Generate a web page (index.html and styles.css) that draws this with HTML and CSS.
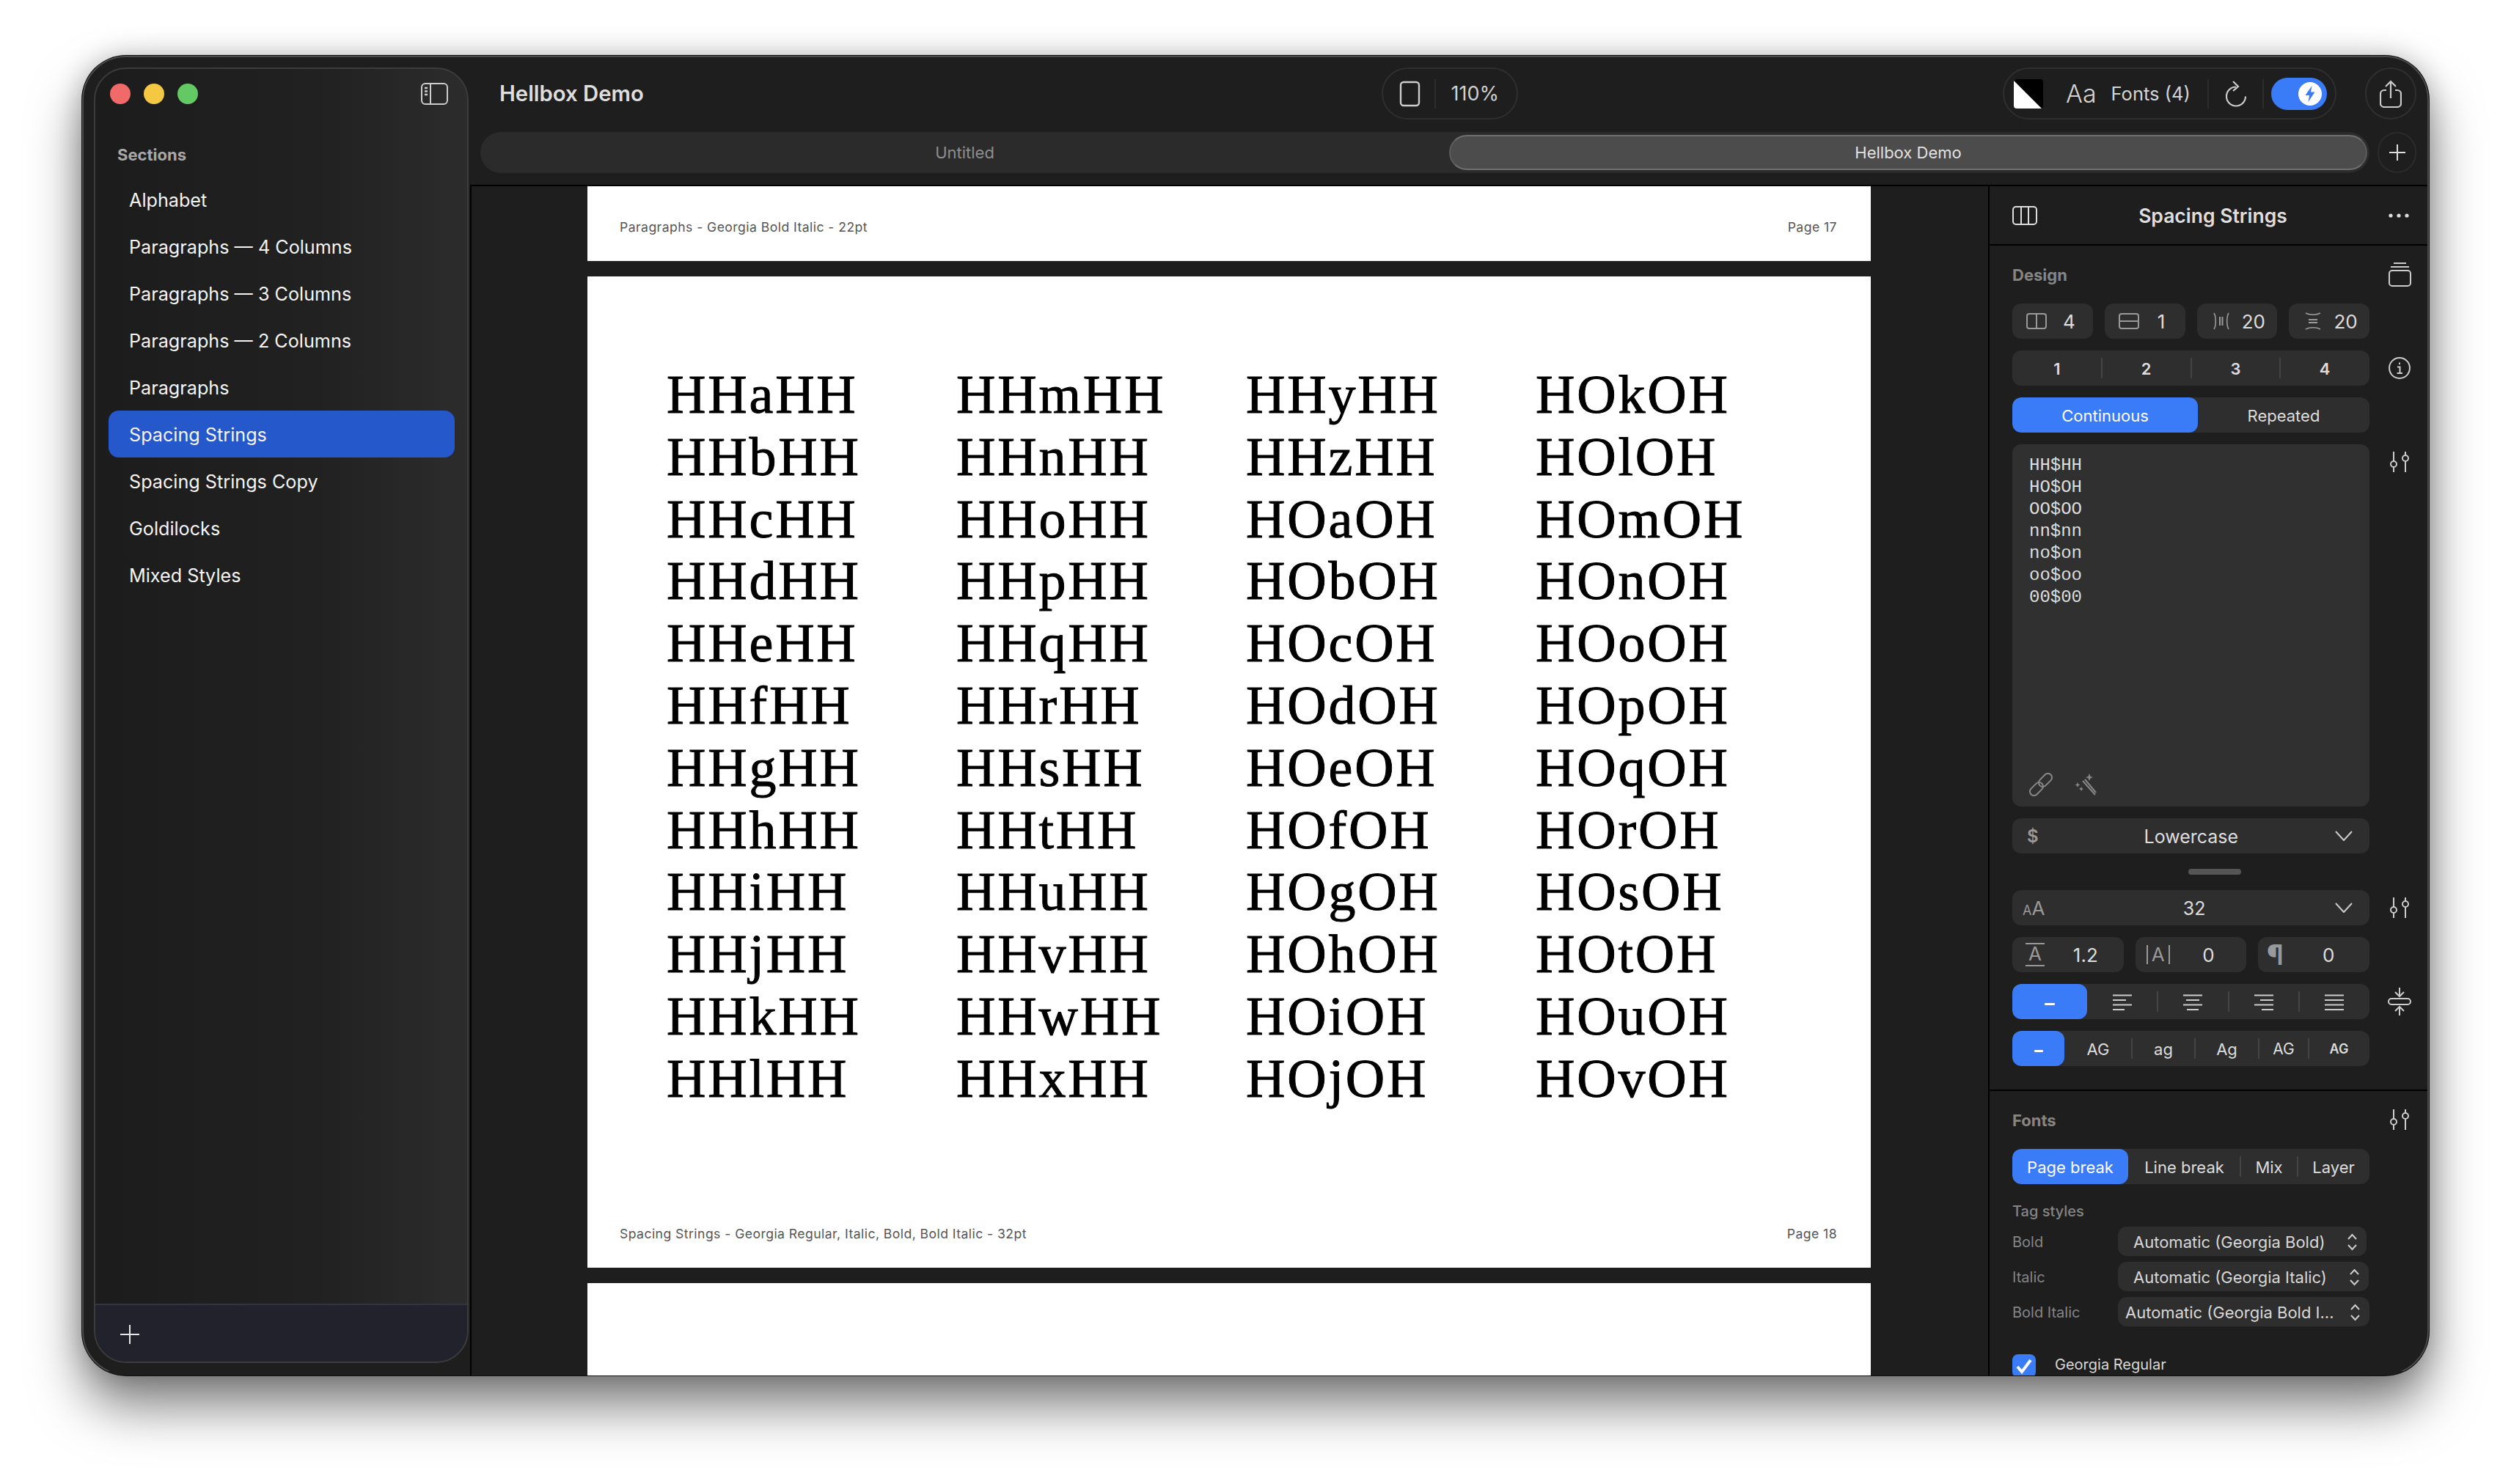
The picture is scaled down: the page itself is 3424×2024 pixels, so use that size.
FILE: index.html
```html
<!DOCTYPE html>
<html lang="en">
<head>
  <meta charset="UTF-8">
  <title>Hellbox Demo</title>
  <link rel="stylesheet" href="styles.css">
</head>
<body>
  <div class="window">

    <!-- Sections sidebar -->
    <div class="sidebar-col">
      <aside class="sidebar">
        <div class="side-head">
          <span class="light red"></span>
          <span class="light yellow"></span>
          <span class="light green"></span>
          <svg class="side-toggle" width="37" height="30" viewBox="0 0 37 30" fill="none" stroke="#ccc" stroke-width="2">
            <rect x="1" y="1" width="35" height="28" rx="5"/>
            <path d="M13 1V29"/>
            <path d="M5 7H9M5 11.5H9M5 16H9" stroke-width="2.4"/>
          </svg>
        </div>
        <div class="side-title">Sections</div>
        <ul class="side-list">
          <li>Alphabet</li>
          <li>Paragraphs — 4 Columns</li>
          <li>Paragraphs — 3 Columns</li>
          <li>Paragraphs — 2 Columns</li>
          <li>Paragraphs</li>
          <li class="active">Spacing Strings</li>
          <li>Spacing Strings Copy</li>
          <li>Goldilocks</li>
          <li>Mixed Styles</li>
        </ul>
        <div class="side-foot">
          <svg width="26" height="26" viewBox="0 0 26 26" stroke="#e6e6e6" stroke-width="2"><path d="M13 0V26M0 13H26"/></svg>
        </div>
      </aside>
    </div>

    <div class="main">

      <!-- Toolbar and tabs -->
      <header class="toolbar">
        <div class="tool-row">
          <div class="doc-title">Hellbox Demo</div>
          <div class="pill zoom-pill">
            <svg width="29" height="36" viewBox="0 0 29 36" fill="none" stroke="#ccc" stroke-width="2.4"><rect x="2" y="2" width="25" height="32" rx="4"/></svg>
            <span class="pill-sep"></span>
            <span class="zoom-val">110%</span>
          </div>
          <div class="tool-right">
            <div class="pill fonts-pill">
              <svg class="contrast" width="40" height="40" viewBox="0 0 40 40"><rect width="40" height="40" rx="4" fill="#000"/><path d="M0 2L38 40H4a4 4 0 0 1-4-4Z" fill="#fff"/></svg>
              <span class="aa">Aa</span>
              <span class="fonts-label">Fonts (4)</span>
              <span class="pill-sep"></span>
              <svg class="refresh" width="30" height="38" viewBox="0 0 30 38" fill="none" stroke="#ccc" stroke-width="2.2"><path d="M15 9.5A13 13 0 1 0 28 22.500"/><path d="M11 2L18 9L11 15"/></svg>
              <span class="pill-sep"></span>
              <div class="toggle">
                <svg width="32" height="32" viewBox="0 0 32 32"><circle cx="16" cy="16" r="16" fill="#fff"/><path d="M18.500 5L9.500 18H15L13.500 27L22.500 13.500H17Z" fill="#3a7bf7"/></svg>
              </div>
            </div>
            <div class="pill share-pill">
              <svg width="30" height="38" viewBox="0 0 30 38" fill="none" stroke="#ccc" stroke-width="2.2"><path d="M9 14H6a5 5 0 0 0-5 5V32a5 5 0 0 0 5 5H24a5 5 0 0 0 5-5V19a5 5 0 0 0-5-5H21"/><path d="M15 25V2M8 9L15 2L22 9"/></svg>
            </div>
          </div>
        </div>
        <div class="tab-row">
          <div class="tabs">
            <div class="tab">Untitled</div>
            <div class="tab current">Hellbox Demo</div>
          </div>
          <div class="tab-add">
            <svg width="22" height="22" viewBox="0 0 22 22" stroke="#ddd" stroke-width="2"><path d="M11 0V22M0 11H22"/></svg>
          </div>
        </div>
      </header>

      <div class="workspace">

        <!-- Document pages -->
        <section class="canvas">
          <div class="page page-top">
            <span>Paragraphs - Georgia Bold Italic - 22pt</span>
            <span>Page 17</span>
          </div>
          <div class="page page-full">
            <div class="strings">
              <p>HHaHH<br>HHbHH<br>HHcHH<br>HHdHH<br>HHeHH<br>HHfHH<br>HHgHH<br>HHhHH<br>HHiHH<br>HHjHH<br>HHkHH<br>HHlHH</p>
              <p>HHmHH<br>HHnHH<br>HHoHH<br>HHpHH<br>HHqHH<br>HHrHH<br>HHsHH<br>HHtHH<br>HHuHH<br>HHvHH<br>HHwHH<br>HHxHH</p>
              <p>HHyHH<br>HHzHH<br>HOaOH<br>HObOH<br>HOcOH<br>HOdOH<br>HOeOH<br>HOfOH<br>HOgOH<br>HOhOH<br>HOiOH<br>HOjOH</p>
              <p>HOkOH<br>HOlOH<br>HOmOH<br>HOnOH<br>HOoOH<br>HOpOH<br>HOqOH<br>HOrOH<br>HOsOH<br>HOtOH<br>HOuOH<br>HOvOH</p>
            </div>
            <div class="page-foot">
              <span>Spacing Strings - Georgia Regular, Italic, Bold, Bold Italic - 32pt</span>
              <span>Page 18</span>
            </div>
          </div>
          <div class="page page-next"></div>
        </section>

        <!-- Inspector -->
        <section class="inspector">
          <div class="insp-head">
            <svg width="34" height="26" viewBox="0 0 34 26" fill="none" stroke="#ddd" stroke-width="2"><rect x="1" y="1" width="32" height="24" rx="4"/><path d="M12 1V25M22 1V25"/></svg>
            <div class="insp-title">Spacing Strings</div>
            <svg width="28" height="6" viewBox="0 0 28 6" fill="#ddd"><circle cx="3" cy="3" r="2.600"/><circle cx="14" cy="3" r="2.600"/><circle cx="25" cy="3" r="2.600"/></svg>
          </div>

          <div class="group">
            <div class="row head-row">
              <div class="ctl group-label">Design</div>
              <div class="side">
                <svg width="31" height="33" viewBox="0 0 31 33" fill="none" stroke="#ccc" stroke-width="2"><path d="M7 1H24M3 6H28"/><rect x="1" y="11" width="29" height="21" rx="4"/></svg>
              </div>
            </div>

            <div class="row">
              <div class="ctl quad">
                <div class="tile">
                  <span class="tile-icon"><svg width="28" height="22" viewBox="0 0 28 22" fill="none" stroke="#999" stroke-width="2"><rect x="1" y="1" width="26" height="20" rx="3"/><path d="M14 1V21"/></svg></span>
                  <span class="tile-val">4</span>
                </div>
                <div class="tile">
                  <span class="tile-icon"><svg width="28" height="22" viewBox="0 0 28 22" fill="none" stroke="#999" stroke-width="2"><rect x="1" y="1" width="26" height="20" rx="3"/><path d="M1 11H27"/></svg></span>
                  <span class="tile-val">1</span>
                </div>
                <div class="tile">
                  <span class="tile-icon"><svg width="22" height="24" viewBox="0 0 22 24" fill="none" stroke="#999" stroke-width="1.600"><path d="M1 1C4 6 4 18 1 23M21 1C18 6 18 18 21 23"/><path d="M9 6V18M12.500 6V18" stroke-width="2"/></svg></span>
                  <span class="tile-val">20</span>
                </div>
                <div class="tile">
                  <span class="tile-icon"><svg width="22" height="24" viewBox="0 0 22 24" fill="none" stroke="#999" stroke-width="1.600"><path d="M1 1C6 4 16 4 21 1M1 23C6 20 16 20 21 23"/><path d="M5 10H17M5 14H17" stroke-width="2"/></svg></span>
                  <span class="tile-val">20</span>
                </div>
              </div>
              <div class="side"></div>
            </div>

            <div class="row">
              <div class="ctl seg cols-page">
                <span>1</span><span>2</span><span>3</span><span>4</span>
              </div>
              <div class="side">
                <svg width="30" height="30" viewBox="0 0 30 30" fill="none" stroke="#ccc" stroke-width="2"><circle cx="15" cy="15" r="14"/><path d="M15 7.500V10M12 13.500H15.500V21.500M11.500 22H19" stroke-width="2"/></svg>
              </div>
            </div>

            <div class="row">
              <div class="ctl seg cols-mode">
                <span class="on">Continuous</span><span>Repeated</span>
              </div>
              <div class="side"></div>
            </div>

            <div class="row row-top">
              <div class="ctl text-box">
                <pre class="strings-src">HH$HH
HO$OH
OO$OO
nn$nn
no$on
oo$oo
00$00</pre>
                <div class="text-tools">
                  <svg width="32" height="32" viewBox="0 0 32 32" fill="none" stroke="#888" stroke-width="2"><g transform="rotate(-45 16 16)"><rect x="-3" y="10.500" width="21" height="11" rx="5.500"/><rect x="14" y="10.500" width="21" height="11" rx="5.500"/></g></svg>
                  <svg width="30" height="30" viewBox="0 0 30 30" fill="none" stroke="#888" stroke-width="2"><path d="M11 10L28 29M14 8L29 26"/><path d="M20 0L21.500 4L25 5L21.500 6.500L20 10L18.500 6.500L15 5L18.500 4Z" fill="#888" stroke="none"/><path d="M4 12L5 14.500L7.500 15.500L5 16.500L4 19L3 16.500L0.500 15.500L3 14.500Z" fill="#888" stroke="none"/><path d="M9 18L10 20L12 21L10 22L9 24L8 22L6 21L8 20Z" fill="#888" stroke="none"/></svg>
                </div>
              </div>
              <div class="side side-top">
                <svg class="sliders" width="26" height="28" viewBox="0 0 26 28" fill="none" stroke="#ccc" stroke-width="2"><path d="M5 0V13M5 21V28M21 0V5M21 13V28"/><circle cx="5" cy="17" r="4"/><circle cx="21" cy="9" r="4"/></svg>
              </div>
            </div>

            <div class="row">
              <div class="ctl dropdown">
                <span class="drop-lead dollar">$</span>
                <span class="drop-val">Lowercase</span>
                <svg width="24" height="14" viewBox="0 0 24 14" fill="none" stroke="#ccc" stroke-width="2"><path d="M1 1L12 13L23 1"/></svg>
              </div>
              <div class="side"></div>
            </div>
          </div>

          <div class="handle"></div>

          <div class="group">
            <div class="row">
              <div class="ctl dropdown">
                <span class="drop-lead size-aa"><small>A</small>A</span>
                <span class="drop-val">32</span>
                <svg width="24" height="14" viewBox="0 0 24 14" fill="none" stroke="#ccc" stroke-width="2"><path d="M1 1L12 13L23 1"/></svg>
              </div>
              <div class="side">
                <svg class="sliders" width="26" height="28" viewBox="0 0 26 28" fill="none" stroke="#ccc" stroke-width="2"><path d="M5 0V13M5 21V28M21 0V5M21 13V28"/><circle cx="5" cy="17" r="4"/><circle cx="21" cy="9" r="4"/></svg>
              </div>
            </div>

            <div class="row">
              <div class="ctl triple">
                <div class="tile wide">
                  <span class="wide-icon"><span class="lead-a">A</span></span>
                  <span class="tile-val">1.2</span>
                </div>
                <div class="tile wide">
                  <span class="wide-icon"><span class="track-a">A</span></span>
                  <span class="tile-val">0</span>
                </div>
                <div class="tile wide">
                  <span class="wide-icon pilcrow">¶</span>
                  <span class="tile-val">0</span>
                </div>
              </div>
              <div class="side"></div>
            </div>

            <div class="row">
              <div class="ctl seg cols-align">
                <span class="on"><i class="dash"></i></span>
                <span><svg width="26" height="22" viewBox="0 0 26 22" stroke="#ccc" stroke-width="2"><path d="M0 1.500H26M0 8H18M0 14.500H26M0 21H16"/></svg></span>
                <span><svg width="26" height="22" viewBox="0 0 26 22" stroke="#ccc" stroke-width="2"><path d="M0 1.500H26M4 8H22M0 14.500H26M5 21H21"/></svg></span>
                <span><svg width="26" height="22" viewBox="0 0 26 22" stroke="#ccc" stroke-width="2"><path d="M0 1.500H26M8 8H26M0 14.500H26M10 21H26"/></svg></span>
                <span><svg width="26" height="22" viewBox="0 0 26 22" stroke="#ccc" stroke-width="2"><path d="M0 1.500H26M0 8H26M0 14.500H26M0 21H26"/></svg></span>
              </div>
              <div class="side">
                <svg width="32" height="38" viewBox="0 0 32 38" fill="none" stroke="#ccc" stroke-width="2"><rect x="1" y="15" width="30" height="8" rx="4"/><path d="M16 0V11M10 6L16 12L22 6M16 38V27M10 32L16 26L22 32"/></svg>
              </div>
            </div>

            <div class="row">
              <div class="ctl seg cols-case">
                <span class="on"><i class="dash small"></i></span>
                <span class="case-a">AG</span>
                <span class="case-b">ag</span>
                <span class="case-c">Ag</span>
                <span class="case-d">AG</span>
                <span class="case-e">AG</span>
              </div>
              <div class="side"></div>
            </div>
          </div>

          <div class="insp-rule"></div>

          <div class="group">
            <div class="row head-row">
              <div class="ctl group-label">Fonts</div>
              <div class="side">
                <svg class="sliders" width="26" height="28" viewBox="0 0 26 28" fill="none" stroke="#ccc" stroke-width="2"><path d="M5 0V13M5 21V28M21 0V5M21 13V28"/><circle cx="5" cy="17" r="4"/><circle cx="21" cy="9" r="4"/></svg>
              </div>
            </div>

            <div class="row">
              <div class="ctl seg cols-break">
                <span class="on">Page break</span><span>Line break</span><span>Mix</span><span>Layer</span>
              </div>
              <div class="side"></div>
            </div>
          </div>

          <div class="tag-title">Tag styles</div>
          <div class="tag-list">
            <div class="tag-row">
              <span class="tag-name">Bold</span>
              <div class="tag-select sel-bold"><span>Automatic (Georgia Bold)</span>
                <svg width="13" height="24" viewBox="0 0 13 24" fill="none" stroke="#ccc" stroke-width="2"><path d="M1 8L6.500 2L12 8M1 16L6.500 22L12 16"/></svg>
              </div>
            </div>
            <div class="tag-row">
              <span class="tag-name">Italic</span>
              <div class="tag-select sel-italic"><span>Automatic (Georgia Italic)</span>
                <svg width="13" height="24" viewBox="0 0 13 24" fill="none" stroke="#ccc" stroke-width="2"><path d="M1 8L6.500 2L12 8M1 16L6.500 22L12 16"/></svg>
              </div>
            </div>
            <div class="tag-row">
              <span class="tag-name">Bold Italic</span>
              <div class="tag-select sel-both"><span>Automatic (Georgia Bold I...</span>
                <svg width="13" height="24" viewBox="0 0 13 24" fill="none" stroke="#ccc" stroke-width="2"><path d="M1 8L6.500 2L12 8M1 16L6.500 22L12 16"/></svg>
              </div>
            </div>
          </div>

          <div class="font-check">
            <span class="check">
              <svg width="24" height="22" viewBox="0 0 24 22" fill="none" stroke="#fff" stroke-width="4"><path d="M3 12L9 19L21 3"/></svg>
            </span>
            <span class="check-label">Georgia Regular</span>
          </div>
        </section>
      </div>
    </div>
  </div>
</body>
</html>
```

FILE: styles.css
```css
* {
  box-sizing: border-box;
}

html, body {
  height: 2024px;
  overflow: hidden;
}

body {
  margin: 0;
  background: #ffffff;
  font-family: "Inter", "Liberation Sans", sans-serif;
  color: #dddddd;
}

.window {
  display: flex;
  width: 3200px;
  height: 1800px;
  margin: 76px 0 0 112px;
  background: #1e1e1e;
  border-radius: 60px;
  overflow: hidden;
  box-shadow: 0 0 0 1px #111111, 0 42px 70px rgba(0, 0, 0, 0.5), 0 0 36px rgba(0, 0, 0, 0.22);
  position: relative;
}

/* thin light rim, sits over the content */
.window::after {
  content: "";
  position: absolute;
  inset: 0;
  border-radius: 60px;
  border: 2px solid #4c4c4c;
  pointer-events: none;
  clip-path: inset(0 0 6px 0);
}

/* Sidebar */
.sidebar-col {
  width: 529px;
  flex: none;
  padding: 16px 2px 17px 16px;
}

.sidebar {
  display: flex;
  flex-direction: column;
  height: 100%;
  border: 2px solid #3c3c3c;
  border-radius: 44px;
  overflow: hidden;
  background: linear-gradient(90deg, #1c1c1c 0%, #212121 60%, #2c2c2c 100%);
}

.side-head {
  display: flex;
  align-items: center;
  gap: 18px;
  height: 68px;
  padding: 0 26px 0 20px;
  flex: none;
}

.light {
  width: 28px;
  height: 28px;
  border-radius: 50%;
}

.light.red { background: #f06a6a; }
.light.yellow { background: #f4c842; }
.light.green { background: #62c964; }

.side-toggle {
  margin-left: auto;
}

.side-title {
  margin: 34px 0 14px 30px;
  height: 30px;
  line-height: 30px;
  font-size: 22px;
  font-weight: 700;
  color: #a8a8a8;
}

.side-list {
  list-style: none;
  margin: 0 17px 0 18px;
  padding: 0;
}

.side-list li {
  height: 64px;
  line-height: 66px;
  padding-left: 28px;
  font-size: 25.200px;
  color: #f4f4f4;
  border-radius: 14px;
}

.side-list li.active {
  background: #2558cb;
}

.side-foot {
  display: flex;
  align-items: center;
  margin-top: auto;
  height: 79px;
  padding: 2px 0 0 34px;
  background: #22222c;
  border-top: 2px solid #34343f;
  flex: none;
}

/* Toolbar */
.main {
  flex: 1;
  display: flex;
  flex-direction: column;
  min-width: 0;
}

.toolbar {
  height: 178px;
  padding: 16px 14px 0;
  border-bottom: 2px solid #000000;
  flex: none;
}

.tool-row {
  display: grid;
  grid-template-columns: 1fr auto 1fr;
  align-items: center;
  height: 71px;
}

.doc-title {
  margin-left: 26px;
  font-size: 29.300px;
  font-weight: 600;
  color: #dedede;
}

.pill {
  display: flex;
  align-items: center;
  height: 71px;
  border: 2px solid #2f2f2f;
  border-radius: 36px;
}

.pill-sep {
  width: 2px;
  height: 40px;
  background: #2c2c2c;
}

.zoom-pill {
  width: 186px;
  padding-left: 22px;
}

.zoom-pill .pill-sep {
  margin: 0 21px 0 19px;
}

.zoom-val {
  font-size: 27px;
  color: #d0d0d0;
}

.tool-right {
  display: flex;
  justify-content: flex-end;
  gap: 39px;
  margin-right: 3px;
}

.fonts-pill {
  width: 455px;
  padding-left: 13px;
}

.aa {
  margin-left: 31px;
  font-size: 34px;
  font-weight: 300;
  color: #d4d4d4;
}

.fonts-label {
  margin-left: 20px;
  font-size: 25.500px;
  color: #d4d4d4;
}

.fonts-pill .pill-sep {
  margin: 0 10px;
}

.fonts-label + .pill-sep {
  margin-left: 23px;
}

.refresh {
  margin-left: 12px;
  margin-right: 11px;
}

.toggle {
  display: flex;
  align-items: center;
  justify-content: flex-end;
  width: 76px;
  height: 44px;
  padding-right: 7px;
  border-radius: 22px;
  background: #3a7bf7;
}

.share-pill {
  width: 70px;
  justify-content: center;
}

.tab-row {
  display: flex;
  align-items: center;
  gap: 11px;
  height: 56px;
  margin-top: 17px;
}

.tabs {
  display: flex;
  align-items: center;
  width: 2576px;
  height: 56px;
  padding-right: 3px;
  background: #2b2b2b;
  border-radius: 28px;
}

.tab {
  flex: 1;
  text-align: center;
  font-size: 22px;
  color: #8e8e8e;
}

.tab.current {
  flex: none;
  width: 1252px;
  height: 48px;
  line-height: 44px;
  color: #e2e2e2;
  background: #4c4c4c;
  border: 2px solid #6e6e6e;
  border-left-color: #5c5c5c;
  border-right-color: #5c5c5c;
  border-radius: 24px;
}

.tab-add {
  display: flex;
  align-items: center;
  justify-content: center;
  width: 53px;
  height: 56px;
  border: 2px solid #2b2b2b;
  border-radius: 28px;
}

/* Pages */
.workspace {
  flex: 1;
  display: flex;
  min-height: 0;
}

.canvas {
  flex: 1;
  display: flex;
  flex-direction: column;
  align-items: center;
  gap: 21px;
  min-width: 0;
  padding-right: 2px;
  overflow: hidden;
  border-left: 2px solid #000000;
}

.page {
  width: 1750px;
  flex: none;
  background: #ffffff;
  color: #555555;
  font-size: 17.600px;
  letter-spacing: 0.44px;
}

.page-top {
  display: flex;
  justify-content: space-between;
  align-items: center;
  height: 102px;
  padding: 8px 46px 0 44px;
}

.page-full {
  display: flex;
  flex-direction: column;
  height: 1352px;
  padding: 119px 46px 35px 108px;
}

.strings {
  display: grid;
  grid-template-columns: repeat(4, 395px);
}

.strings p {
  margin: 0;
  font-family: "Liberation Serif", serif;
  font-size: 74px;
  line-height: 84.800px;
  letter-spacing: 2.800px;
  color: #000000;
  -webkit-text-stroke: 1px #000000;
}

.page-foot {
  display: flex;
  justify-content: space-between;
  align-items: center;
  margin: auto 0 0 -64px;
  height: 24px;
}

.page-next {
  height: 300px;
}

/* Inspector */
.inspector {
  width: 601px;
  flex: none;
  padding-left: 31px;
  overflow: hidden;
  border-left: 2px solid #000000;
}

.insp-head {
  display: flex;
  justify-content: space-between;
  align-items: center;
  height: 81px;
  margin-left: -31px;
  padding: 0 27px 0 31px;
  border-bottom: 2px solid #000000;
}

.insp-title {
  font-size: 26.500px;
  font-weight: 600;
  color: #dedede;
}

.group {
  display: flex;
  flex-direction: column;
  gap: 16px;
}

.row {
  display: flex;
  align-items: center;
}

.row-top {
  align-items: flex-start;
}

.head-row {
  height: 40px;
  margin: 19px 0 4px;
}

.ctl {
  width: 487px;
  flex: none;
}

.side {
  display: flex;
  justify-content: center;
  width: 82px;
  flex: none;
}

.side-top {
  padding-top: 10px;
}

.group-label {
  padding-top: 1px;
  font-size: 22px;
  font-weight: 700;
  color: #858585;
}

.quad {
  display: grid;
  grid-template-columns: repeat(4, 1fr);
  gap: 16px;
}

.triple {
  display: grid;
  grid-template-columns: repeat(3, 1fr);
  gap: 16px;
}

.tile {
  display: flex;
  align-items: center;
  height: 48px;
  padding: 0 3px 0 19px;
  background: #2e2e2e;
  border-radius: 12px;
}

.tile-icon {
  display: flex;
  justify-content: center;
  width: 28px;
}

.tile-val {
  flex: 1;
  padding: 1px 0 0 1px;
  text-align: center;
  font-size: 26px;
  color: #dddddd;
}

.tile.wide {
  padding: 0 0 0 15px;
}

.wide-icon {
  display: flex;
  justify-content: center;
  width: 32px;
  color: #999999;
  font-size: 26px;
}

.lead-a {
  display: block;
  width: 26px;
  height: 32px;
  line-height: 26px;
  text-align: center;
  border-top: 2px solid #999999;
  border-bottom: 2px solid #999999;
}

.track-a {
  display: block;
  width: 32px;
  height: 26px;
  line-height: 26px;
  text-align: center;
  border-left: 2px solid #999999;
  border-right: 2px solid #999999;
}

.pilcrow {
  margin-left: -8px;
  font-size: 38px;
  font-weight: 700;
  line-height: 40px;
}

.seg {
  display: grid;
  height: 48px;
  background: #2e2e2e;
  border-radius: 12px;
  overflow: hidden;
}

.seg span {
  display: flex;
  align-items: center;
  justify-content: center;
  position: relative;
  padding-top: 1px;
  font-size: 22px;
  color: #dddddd;
}

/* dividers between the cells of a segmented control */
.seg span + span::before {
  content: "";
  position: absolute;
  left: -1px;
  top: 10px;
  bottom: 10px;
  width: 2px;
  background: #444444;
}

.seg span.on {
  background: #3a7bf7;
  color: #ffffff;
  border-radius: 12px;
}

.seg span.on + span::before {
  display: none;
}

.cols-page { grid-template-columns: repeat(4, 1fr); }
.cols-page span { font-weight: 600; }
.cols-mode { grid-template-columns: 253px 1fr; }
.cols-align { grid-template-columns: 102px repeat(4, 1fr); }
.cols-case { grid-template-columns: 71px 92px 86px 87px 68px 83px; }
.cols-break { grid-template-columns: 158px 153px 78px 98px; }

.dash {
  display: block;
  width: 14px;
  height: 3px;
  margin-top: 6px;
  background: #ffffff;
  border-radius: 1px;
}

.dash.small {
  width: 12px;
}

.seg .case-d { font-size: 21px; }
.seg .case-e { font-size: 18px; font-weight: 600; }

.text-box {
  display: flex;
  flex-direction: column;
  justify-content: space-between;
  height: 494px;
  padding: 14px 23px 14px;
  background: #303030;
  border-radius: 12px;
}

.strings-src {
  margin: 0;
  font-family: "Liberation Mono", monospace;
  font-size: 24px;
  line-height: 30px;
  color: #dddddd;
}

.text-tools {
  display: flex;
  align-items: center;
  gap: 30px;
}

.dropdown {
  display: flex;
  align-items: center;
  height: 48px;
  padding: 0 23px 0 20px;
  background: #2e2e2e;
  border-radius: 12px;
  position: relative;
}

.drop-lead {
  color: #999999;
}

.dollar {
  font-size: 24px;
  font-weight: 600;
}

.size-aa {
  margin-left: -6px;
  font-size: 26px;
}

.size-aa small {
  font-size: 18px;
}

.drop-val {
  flex: 1;
  padding-top: 1px;
  text-align: center;
  margin-right: -12px;
  font-size: 25px;
  color: #dddddd;
}

.handle {
  width: 72px;
  height: 8px;
  margin: 21px 0 21px 240px;
  background: #555555;
  border-radius: 4px;
}

.insp-rule {
  height: 2px;
  margin: 32px 0 0 -31px;
  background: #000000;
}

.tag-title {
  margin-top: 24px;
  height: 26px;
  line-height: 27px;
  font-size: 20px;
  font-weight: 500;
  color: #858585;
}

.tag-list {
  display: flex;
  flex-direction: column;
  gap: 8px;
  margin-top: 8px;
}

.tag-row {
  display: flex;
  align-items: center;
  height: 40px;
}

.tag-name {
  width: 144px;
  padding-top: 1px;
  font-size: 20px;
  color: #858585;
}

.tag-select {
  display: flex;
  align-items: center;
  justify-content: space-between;
  height: 40px;
  padding: 1px 13px 0 21px;
  background: #2e2e2e;
  border-radius: 12px;
  font-size: 22px;
  color: #d8d8d8;
}

.sel-bold { width: 339px; }
.sel-italic { width: 342px; }
.sel-both { width: 343px; padding-left: 10px; }

.font-check {
  display: flex;
  align-items: flex-start;
  gap: 26px;
  margin-top: 38px;
}

.check {
  display: flex;
  align-items: center;
  justify-content: center;
  width: 32px;
  height: 32px;
  background: #3a7bf7;
  border-radius: 8px;
}

.check-label {
  margin-top: 2px;
  font-size: 20px;
  color: #d8d8d8;
}
```
